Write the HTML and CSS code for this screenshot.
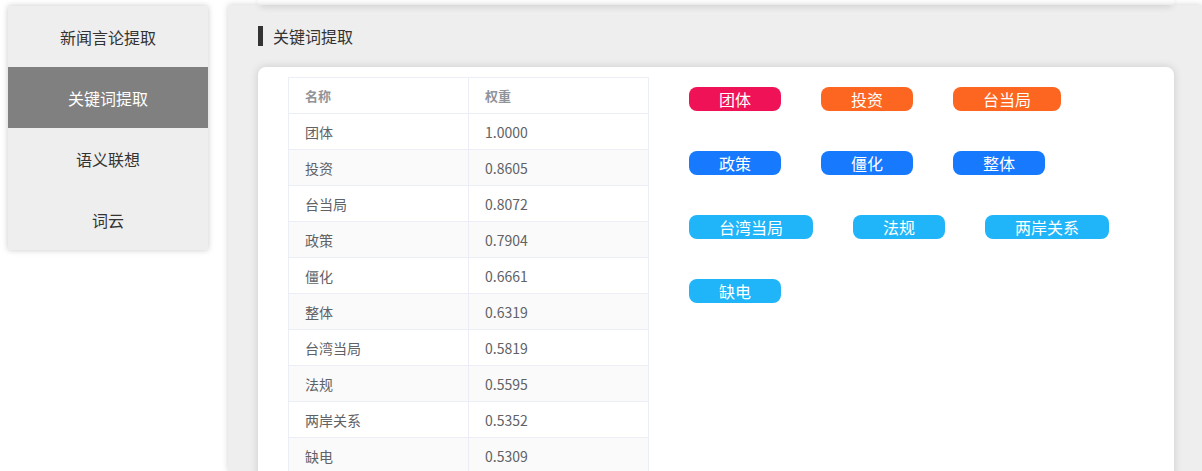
FILE: index.html
```html
<!DOCTYPE html>
<html lang="zh">
<head>
<meta charset="utf-8">
<link rel="stylesheet" href="styles.css">
</head>
<body>
<div class="layout">
  <nav class="sidebar">
    <div class="nav-item">新闻言论提取</div>
    <div class="nav-item active">关键词提取</div>
    <div class="nav-item">语义联想</div>
    <div class="nav-item">词云</div>
  </nav>
  <main class="panel">
    <div class="prev-card"></div>
    <h2 class="title">关键词提取</h2>
    <section class="card">
      <table class="kw-table">
        <thead>
          <tr><th>名称</th><th>权重</th></tr>
        </thead>
        <tbody>
          <tr><td>团体</td><td>1.0000</td></tr>
          <tr><td>投资</td><td>0.8605</td></tr>
          <tr><td>台当局</td><td>0.8072</td></tr>
          <tr><td>政策</td><td>0.7904</td></tr>
          <tr><td>僵化</td><td>0.6661</td></tr>
          <tr><td>整体</td><td>0.6319</td></tr>
          <tr><td>台湾当局</td><td>0.5819</td></tr>
          <tr><td>法规</td><td>0.5595</td></tr>
          <tr><td>两岸关系</td><td>0.5352</td></tr>
          <tr><td>缺电</td><td>0.5309</td></tr>
        </tbody>
      </table>
      <div class="tags">
        <div class="tag-row">
          <span class="tag pink">团体</span>
          <span class="tag orange">投资</span>
          <span class="tag orange">台当局</span>
        </div>
        <div class="tag-row">
          <span class="tag blue">政策</span>
          <span class="tag blue">僵化</span>
          <span class="tag blue">整体</span>
        </div>
        <div class="tag-row">
          <span class="tag sky">台湾当局</span>
          <span class="tag sky">法规</span>
          <span class="tag sky">两岸关系</span>
        </div>
        <div class="tag-row">
          <span class="tag sky">缺电</span>
        </div>
      </div>
    </section>
  </main>
</div>
</body>
</html>
```

FILE: styles.css
```css
html, body {
  margin: 0;
  padding: 0;
  height: 100%;
  background: #fff;
  overflow: hidden;
  font-family: "Noto Sans CJK SC", "Noto Sans", sans-serif;
}

.layout {
  display: flex;
  align-items: flex-start;
  padding: 0 0 0 8px;
  height: 100%;
  box-sizing: border-box;
}

.sidebar {
  width: 200px;
  margin-top: 6px;
  background: #eeeeee;
  box-shadow: 0 0 6px rgba(0, 0, 0, 0.22);
  flex-shrink: 0;
}

.nav-item {
  height: 61px;
  display: flex;
  align-items: center;
  justify-content: center;
  font-size: 16px;
  color: #333;
}

.nav-item.active {
  background: #808080;
  color: #fff;
}

.panel {
  flex: 1;
  margin-left: 20px;
  margin-top: 5px;
  align-self: stretch;
  background: #eeeeee;
  box-shadow: 0 0 6px rgba(0, 0, 0, 0.18);
  padding: 0 28px 0 30px;
  position: relative;
}

.prev-card {
  height: 20px;
  margin-top: -20px;
  box-shadow: 0 4px 7px -2px rgba(0, 0, 0, 0.12);
}

.title {
  margin: 21px 0 0;
  height: 20px;
  line-height: 20px;
  border-left: 5px solid #333;
  padding-left: 10px;
  font-size: 16px;
  font-weight: normal;
  color: #333;
}

.card {
  margin-top: 21px;
  background: #fff;
  border-radius: 8px;
  box-shadow: 0 0 8px rgba(0, 0, 0, 0.15);
  padding: 10px 30px 0;
  display: flex;
  align-items: flex-start;
  height: 500px;
}

.kw-table {
  border-collapse: collapse;
  border: 1px solid #ebeef5;
  font-size: 14px;
  flex-shrink: 0;
}

.kw-table th,
.kw-table td {
  width: 147px;
  height: 35px;
  padding: 0 16px;
  text-align: left;
  border: 1px solid #ebeef5;
  line-height: 20px;
}

.kw-table th {
  color: #909399;
  font-weight: bold;
  font-size: 13px;
}

.kw-table td {
  color: #606266;
  font-size: 14px;
}

.kw-table tbody tr:nth-child(even) td {
  background: #fafafa;
}

.tags {
  margin-left: 40px;
  padding-top: 10px;
}

.tag-row {
  display: flex;
  gap: 40px;
  margin-bottom: 40px;
}

.tag {
  display: inline-block;
  height: 24px;
  line-height: 24px;
  padding: 0 30px;
  border-radius: 8px;
  color: #fff;
  font-size: 16px;
  white-space: nowrap;
}

.tag.pink { background: #f01257; }
.tag.orange { background: #fd6620; }
.tag.blue { background: #1779fe; }
.tag.sky { background: #1fb5f8; }
```
